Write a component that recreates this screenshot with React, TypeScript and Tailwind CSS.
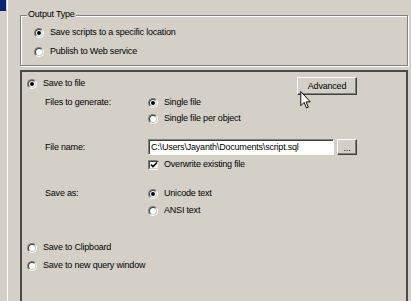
import React from "react";

function Radio({ checked }: { checked?: boolean }) {
  return (
    <span className="w-[10px] h-[10px] shrink-0 rounded-full border border-t-[#808080] border-l-[#808080] border-r-white border-b-white flex">
      <span className="flex-1 rounded-full border border-t-[#404040] border-l-[#404040] border-r-[#d4d0c8] border-b-[#d4d0c8] bg-white flex items-center justify-center">
        {checked && <span className="w-[4px] h-[4px] rounded-full bg-black" />}
      </span>
    </span>
  );
}

function Check() {
  return (
    <span className="w-[10px] h-[10px] shrink-0 border border-t-[#808080] border-l-[#808080] border-r-white border-b-white flex">
      <span className="flex-1 border border-t-[#404040] border-l-[#404040] border-r-[#d4d0c8] border-b-[#d4d0c8] bg-white flex items-center justify-center">
        <svg width="8" height="8" viewBox="0 0 8 8">
          <path d="M1 3.5 L3 5.5 L7 1.5" fill="none" stroke="#000" strokeWidth="1.6" />
        </svg>
      </span>
    </span>
  );
}

function Opt({ checked, label }: { checked?: boolean; label: string }) {
  return (
    <div className="flex items-center h-[13px]">
      <Radio checked={checked} />
      <span className="ml-[6px] whitespace-nowrap">{label}</span>
    </div>
  );
}

export default function App() {
  return (
    <div className="relative w-[411px] h-[301px] overflow-hidden bg-[#d4d0c8] flex text-[9px] tracking-[-0.2px] leading-none text-black font-['Liberation_Sans',Arial,sans-serif]">
      <div className="w-[7px] shrink-0">
        <div className="w-[6px] h-[11px] bg-[#0a246a]" />
      </div>
      <div className="w-px shrink-0 bg-white" />
      <div className="flex-1 flex flex-col pl-[12px] pr-[3px]">
        {/* Output Type group */}
        <div className="relative mt-[15px] h-[51px] shrink-0 border border-[#808080] shadow-[inset_1px_1px_0_#fff,1px_1px_0_#fff] pl-[13px]">
          <span className="absolute -top-[6px] left-[6px] px-[1px] bg-[#d4d0c8]">Output Type</span>
          <div className="mt-[10px]">
            <Opt checked label="Save scripts to a specific location" />
          </div>
          <div className="mt-[6px]">
            <Opt label="Publish to Web service" />
          </div>
        </div>

        {/* Main panel */}
        <div className="mt-[4px] flex-1 border-2 border-b-0 border-[#4a4a4a] pl-[5px] flex flex-col">
          <div className="mt-[5px] flex items-start">
            <div className="w-[270px] shrink-0">
              <Opt checked label="Save to file" />
            </div>
            <div className="w-[60px] h-[18px] flex items-center justify-center border border-t-white border-l-white border-r-[#404040] border-b-[#404040] shadow-[inset_-1px_-1px_0_#808080]">
              Advanced
            </div>
          </div>

          <div className="mt-[1px] flex items-center pl-[18px]">
            <span className="w-[103px] shrink-0">Files to generate:</span>
            <Opt checked label="Single file" />
          </div>
          <div className="mt-[3px] pl-[121px]">
            <Opt label="Single file per object" />
          </div>

          <div className="mt-[14px] flex items-center pl-[18px]">
            <span className="w-[103px] shrink-0">File name:</span>
            <div className="w-[186px] h-[16px] shrink-0 bg-white border border-t-[#808080] border-l-[#808080] border-r-white border-b-white shadow-[inset_1px_1px_0_#404040] flex items-center pl-[2px] whitespace-nowrap overflow-hidden">
              {"C:\\Users\\Jayanth\\Documents\\script.sql"}
            </div>
            <div className="ml-[3px] w-[20px] h-[16px] shrink-0 flex items-center justify-center border border-t-white border-l-white border-r-[#404040] border-b-[#404040] shadow-[inset_-1px_-1px_0_#808080] pt-[3px]">
              ...
            </div>
          </div>

          <div className="mt-[3px] pl-[121px] flex items-center h-[13px]">
            <Check />
            <span className="ml-[6px] whitespace-nowrap">Overwrite existing file</span>
          </div>

          <div className="mt-[16px] flex items-center pl-[18px]">
            <span className="w-[103px] shrink-0">Save as:</span>
            <Opt checked label="Unicode text" />
          </div>
          <div className="mt-[4px] pl-[121px]">
            <Opt label="ANSI text" />
          </div>

          <div className="mt-[24px]">
            <Opt label="Save to Clipboard" />
          </div>
          <div className="mt-[5px]">
            <Opt label="Save to new query window" />
          </div>
        </div>
      </div>

      {/* mouse cursor */}
      <svg className="absolute left-[300px] top-[91px]" width="12" height="18" viewBox="0 0 12 19">
        <path d="M0.5 0.5 L0.5 15.5 L4 12 L6.5 18 L8.5 17 L6 11.5 L10.5 11.5 Z" fill="#fff" stroke="#000" strokeWidth="1" strokeLinejoin="miter" />
      </svg>
    </div>
  );
}
